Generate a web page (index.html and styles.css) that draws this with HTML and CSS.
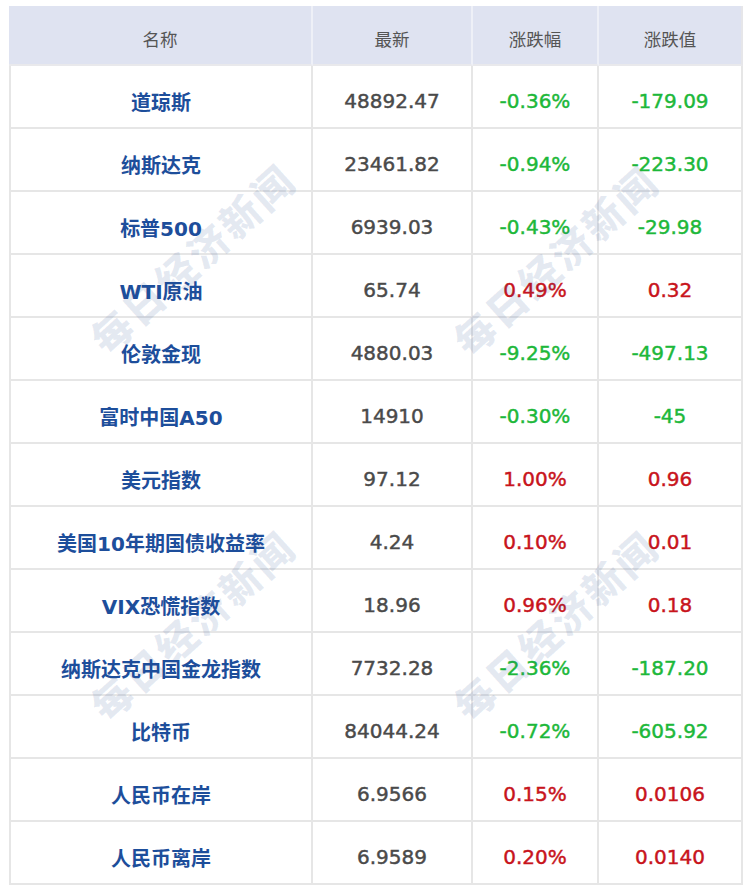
FILE: index.html
```html
<!DOCTYPE html>
<html lang="zh-CN">
<head>
<meta charset="utf-8">
<title>全球市场</title>
<link rel="stylesheet" href="styles.css">
</head>
<body>
<div class="wrap">
  <table class="quotes">
    <colgroup>
      <col class="c-name">
      <col class="c-last">
      <col class="c-pct">
      <col class="c-chg">
    </colgroup>
    <thead>
      <tr><th>名称</th><th>最新</th><th>涨跌幅</th><th>涨跌值</th></tr>
    </thead>
    <tbody>
      <tr><td class="name">道琼斯</td><td class="num">48892.47</td><td class="down">-0.36%</td><td class="down">-179.09</td></tr>
      <tr><td class="name">纳斯达克</td><td class="num">23461.82</td><td class="down">-0.94%</td><td class="down">-223.30</td></tr>
      <tr><td class="name">标普500</td><td class="num">6939.03</td><td class="down">-0.43%</td><td class="down">-29.98</td></tr>
      <tr><td class="name">WTI原油</td><td class="num">65.74</td><td class="up">0.49%</td><td class="up">0.32</td></tr>
      <tr><td class="name">伦敦金现</td><td class="num">4880.03</td><td class="down">-9.25%</td><td class="down">-497.13</td></tr>
      <tr><td class="name">富时中国A50</td><td class="num">14910</td><td class="down">-0.30%</td><td class="down">-45</td></tr>
      <tr><td class="name">美元指数</td><td class="num">97.12</td><td class="up">1.00%</td><td class="up">0.96</td></tr>
      <tr><td class="name">美国10年期国债收益率</td><td class="num">4.24</td><td class="up">0.10%</td><td class="up">0.01</td></tr>
      <tr><td class="name">VIX恐慌指数</td><td class="num">18.96</td><td class="up">0.96%</td><td class="up">0.18</td></tr>
      <tr><td class="name">纳斯达克中国金龙指数</td><td class="num">7732.28</td><td class="down">-2.36%</td><td class="down">-187.20</td></tr>
      <tr><td class="name">比特币</td><td class="num">84044.24</td><td class="down">-0.72%</td><td class="down">-605.92</td></tr>
      <tr><td class="name">人民币在岸</td><td class="num">6.9566</td><td class="up">0.15%</td><td class="up">0.0106</td></tr>
      <tr><td class="name">人民币离岸</td><td class="num">6.9589</td><td class="up">0.20%</td><td class="up">0.0140</td></tr>
    </tbody>
  </table>
  <div class="wm wm-1">每日经济新闻</div>
  <div class="wm wm-2">每日经济新闻</div>
  <div class="wm wm-3">每日经济新闻</div>
  <div class="wm wm-4">每日经济新闻</div>
</div>
</body>
</html>
```

FILE: styles.css
```css
html, body {
  margin: 0;
  padding: 0;
  background: #ffffff;
}

.wrap {
  position: relative;
  width: 734px;
  margin: 6px 0 0 9px;
}

.quotes {
  width: 734px;
  table-layout: fixed;
  border-collapse: separate;
  border-spacing: 0;
  font-family: "DejaVu Sans", "Noto Sans CJK SC", sans-serif;
}

.c-name { width: 304px; }
.c-last { width: 160px; }
.c-pct  { width: 126px; }
.c-chg  { width: 144px; }

.quotes th {
  height: 60px;
  padding: 7px 0 0;
  box-sizing: border-box;
  background: #dfe3f1;
  color: #555555;
  font-family: "Noto Sans CJK SC", sans-serif;
  font-weight: 400;
  font-size: 17.5px;
  text-align: center;
  border-right: 2px solid #eef0f7;
  border-bottom: 2px solid #e9e9ec;
}

.quotes th:last-child {
  border-right: 2px solid #e6e6e9;
}

.quotes td {
  height: 63px;
  box-sizing: border-box;
  padding: 9px 0 0;
  text-align: center;
  font-size: 20px;
  border-right: 2px solid #e6e6e6;
  border-bottom: 2px solid #e6e6e6;
  white-space: nowrap;
}

.quotes td:first-child {
  border-left: 2px solid #e6e6e6;
}

.name {
  color: #1d4e9b;
  font-weight: 700;
}

.num,
.down,
.up {
  -webkit-text-stroke: 0.45px currentColor;
}

.num {
  color: #4a4a4a;
}

.down {
  color: #1db83a;
}

.up {
  color: #c8141c;
}

.wm {
  position: absolute;
  pointer-events: none;
  font-family: "Noto Sans CJK SC", sans-serif;
  font-weight: 900;
  font-size: 40px;
  letter-spacing: 3px;
  white-space: nowrap;
  color: rgba(40, 80, 150, 0.12);
  transform: translate(-50%, -50%) rotate(-42deg);
}

.wm-1 { left: 183px; top: 252px; }
.wm-2 { left: 546px; top: 254px; }
.wm-3 { left: 183px; top: 619px; }
.wm-4 { left: 546px; top: 619px; }
```
